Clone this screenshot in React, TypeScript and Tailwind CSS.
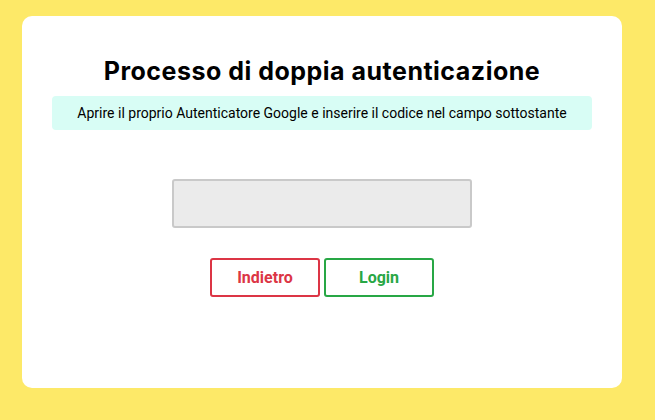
export default function App() {
  return (
    <div className="min-h-screen w-full bg-[#fde968] pt-4 px-[22px] pb-8 font-['Roboto',sans-serif]">
      <div className="h-[372px] w-[600px] rounded-[10px] bg-white px-[30px] pt-[40px]">
        <h1 className="text-center text-[25px] font-bold leading-[30px] text-black font-['Inter',sans-serif] tracking-[0.02em]">
          Processo di doppia autenticazione
        </h1>
        <div className="mt-[10px] h-[34px] rounded-[4px] bg-[#d8fdf5] flex items-center justify-center text-[14px] text-black">
          Aprire il proprio Autenticatore Google e inserire il codice nel campo sottostante
        </div>
        <div className="mt-[49px] flex justify-center">
          <input
            type="text"
            className="h-[49px] w-[300px] rounded-[3px] border-2 border-[#c9c9c9] bg-[#ebebeb] outline-none"
          />
        </div>
        <div className="mt-[30px] flex justify-center gap-1">
          <button className="h-[39px] w-[110px] rounded-[3px] border-2 border-[#dc3545] bg-white text-[16px] font-bold text-[#dc3545]">
            Indietro
          </button>
          <button className="h-[39px] w-[110px] rounded-[3px] border-2 border-[#28a745] bg-white text-[16px] font-bold text-[#28a745]">
            Login
          </button>
        </div>
      </div>
    </div>
  );
}
